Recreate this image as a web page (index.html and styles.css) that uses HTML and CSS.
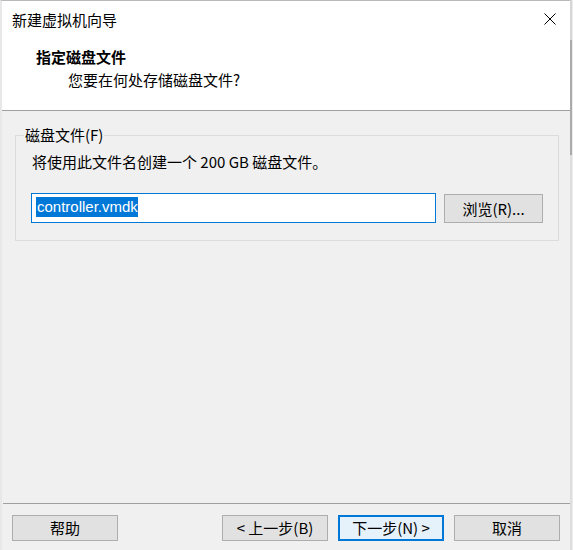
FILE: index.html
```html
<!DOCTYPE html>
<html lang="zh-CN">
<head>
<meta charset="utf-8">
<title>新建虚拟机向导</title>
<link rel="stylesheet" href="styles.css">
</head>
<body>
<div class="frame">
  <div class="window">
    <header class="header">
      <div class="title">新建虚拟机向导</div>
      <svg class="close" width="12" height="12" viewBox="0 0 12 12" aria-label="关闭">
        <path d="M0.5 0.5 L11.5 11.5 M11.5 0.5 L0.5 11.5" stroke="#000" stroke-width="1" fill="none"/>
      </svg>
      <div class="heading">指定磁盘文件</div>
      <div class="subtitle">您要在何处存储磁盘文件?</div>
    </header>
    <main class="content">
      <fieldset class="group">
        <legend class="legend">磁盘文件(F)</legend>
        <div class="desc">将使用此文件名创建一个 200 GB 磁盘文件。</div>
        <div class="row">
          <div class="input"><span class="sel">controller.vmdk</span></div>
          <button class="btn browse">浏览(R)...</button>
        </div>
      </fieldset>
    </main>
    <footer class="footer">
      <button class="btn">帮助</button>
      <div class="spacer"></div>
      <button class="btn">&lt; 上一步(B)</button>
      <button class="btn default">下一步(N) &gt;</button>
      <button class="btn">取消</button>
    </footer>
  </div>
  <div class="edge"></div>
</div>
</body>
</html>
```
FILE: styles.css
```css
* { box-sizing: border-box; }
html, body { margin: 0; padding: 0; }
body {
  width: 573px;
  height: 550px;
  overflow: hidden;
  background: #f0f0f0;
  font-family: "Noto Sans CJK SC", "Noto Sans", sans-serif;
  font-size: 15px;
  color: #000;
}
.frame {
  display: flex;
  width: 573px;
  height: 550px;
}
.window {
  position: relative;
  width: 570px;
  height: 550px;
  display: flex;
  flex-direction: column;
  background: #f0f0f0;
  border-top: 1px solid #b9b9b9;
  border-left: 2px solid #e8e8e8;
}
.edge {
  width: 3px;
  height: 550px;
  background: linear-gradient(to bottom, #d6d6d6 0, #d6d6d6 40px, #ababab 40px, #ababab 155px, #dedede 155px);
  border-right: 1px solid #ececec;
}
.header {
  position: relative;
  height: 110px;
  background: #fff;
  border-bottom: 1px solid #a0a0a0;
  padding-left: 10px;
}
.title {
  margin-top: 10px;
  line-height: 18px;
}
.close {
  position: absolute;
  top: 12px;
  right: 14px;
  display: block;
}
.heading {
  margin-top: 18px;
  margin-left: 24px;
  line-height: 20px;
  font-weight: 700;
}
.subtitle {
  margin-top: 3px;
  margin-left: 56px;
  line-height: 20px;
}
.content {
  flex: 1;
  padding-top: 15px;
}
.group {
  margin: 0 11px 0 13px;
  padding: 0 15px 17px 15px;
  border: 1px solid #dcdcdc;
  min-width: 0;
}
.legend {
  margin-left: -7px;
  padding: 0 1px;
  line-height: 18px;
}
.desc {
  margin-top: 8px;
  margin-left: 1px;
  line-height: 20px;
}
.row {
  display: flex;
  gap: 8px;
  margin-top: 21px;
}
.input {
  width: 405px;
  height: 30px;
  background: #fff;
  border: 1px solid #0078d7;
  padding: 3px 0 0 4px;
  line-height: 20px;
  font-family: "Liberation Sans", "Noto Sans CJK SC", sans-serif;
  font-size: 15px;
}
.sel {
  display: inline-block;
  background: #0078d7;
  color: #fff;
  line-height: 20px;
  padding: 0 0 0 1px;
}
.btn {
  font-family: inherit;
  font-size: 15px;
  color: #000;
  background: #e1e1e1;
  border: 1px solid #adadad;
  border-radius: 0;
  padding: 0;
  width: 106px;
  height: 26px;
  line-height: 22px;
  margin: 0;
}
.browse {
  width: 99px;
  height: 29px;
  margin-top: 1px;
}
.default {
  background: #e5f1fb;
  border-color: #0078d7;
  box-shadow: inset 0 0 0 1px #0078d7;
}
.footer {
  display: flex;
  gap: 10px;
  height: 47px;
  margin-left: 1px;
  border-top: 1px solid #a0a0a0;
  padding: 11px 0 0 9px;
}
.spacer { flex: 1; }
.footer .btn:last-child { margin-right: 10px; }
```
